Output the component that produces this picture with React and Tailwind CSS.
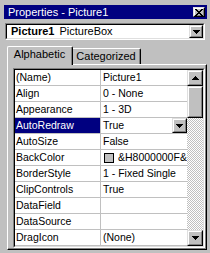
import React from "react";

function DownArrow() {
  return (
    <svg width="7" height="4" viewBox="0 0 7 4" shapeRendering="crispEdges">
      <rect x="0" y="0" width="7" height="1" fill="#000" />
      <rect x="1" y="1" width="5" height="1" fill="#000" />
      <rect x="2" y="2" width="3" height="1" fill="#000" />
      <rect x="3" y="3" width="1" height="1" fill="#000" />
    </svg>
  );
}

function UpArrow() {
  return (
    <svg width="7" height="4" viewBox="0 0 7 4" shapeRendering="crispEdges">
      <rect x="3" y="0" width="1" height="1" fill="#000" />
      <rect x="2" y="1" width="3" height="1" fill="#000" />
      <rect x="1" y="2" width="5" height="1" fill="#000" />
      <rect x="0" y="3" width="7" height="1" fill="#000" />
    </svg>
  );
}

function Raised({ className, children }) {
  return (
    <div className={"border-t border-l border-t-[#dfdfdf] border-l-[#dfdfdf] border-r border-b border-r-black border-b-black " + className}>
      <div className="w-full h-full border-t border-l border-t-white border-l-white border-r border-b border-r-[#808080] border-b-[#808080] bg-[#c0c0c0] flex items-center justify-center">
        {children}
      </div>
    </div>
  );
}

const rows = [
  ["(Name)", "Picture1", ""],
  ["Align", "0 - None", ""],
  ["Appearance", "1 - 3D", ""],
  ["AutoRedraw", "True", "sel"],
  ["AutoSize", "False", ""],
  ["BackColor", "&H8000000F&", "color"],
  ["BorderStyle", "1 - Fixed Single", ""],
  ["ClipControls", "True", ""],
  ["DataField", "", ""],
  ["DataSource", "", ""],
  ["DragIcon", "(None)", ""],
];

export default function App() {
  return (
    <div className="w-[210px] h-[253px] bg-[#c0c0c0] overflow-hidden pt-[5px] font-['Liberation_Sans',Arial,sans-serif] text-black select-none">
      {/* Title bar */}
      <div className="ml-[4px] w-[203px] h-[14px] bg-[#000080] flex items-center justify-between">
        <span className="pl-[4px] text-white text-[11px] leading-[14px] whitespace-nowrap">Properties - Picture1</span>
        <Raised className="w-[12px] h-[10px] mr-[2px]">
          <svg width="8" height="7" viewBox="0 0 8 7" shapeRendering="crispEdges">
            <path d="M0 0h2v1h-2zM6 0h2v1h-2zM1 1h2v1h-2zM5 1h2v1h-2zM2 2h4v1h-4zM3 3h2v1h-2zM2 4h4v1h-4zM1 5h2v1h-2zM5 5h2v1h-2zM0 6h2v1h-2zM6 6h2v1h-2z" fill="#000" />
          </svg>
        </Raised>
      </div>

      {/* Object combo */}
      <div className="mt-[4px] ml-[5px] w-[200px] h-[17px] border-t border-l border-t-[#808080] border-l-[#808080] border-r border-b border-r-white border-b-white">
        <div className="w-full h-full border-t border-l border-t-black border-l-black border-r border-b border-r-[#dfdfdf] border-b-[#dfdfdf] bg-white flex items-center">
          <div className="flex-1 flex items-center pl-[4px] text-[11px] leading-[13px] whitespace-nowrap">
            <span className="font-bold">Picture1</span>
            <span className="ml-[5px]">PictureBox</span>
          </div>
          <Raised className="w-[14px] h-[13px]">
            <DownArrow />
          </Raised>
        </div>
      </div>

      {/* Tabs */}
      <div className="mt-[6px] ml-[7px] h-[18px] flex items-start">
        <div className="relative z-10 w-[66px] h-[19px] bg-[#c0c0c0] border-t border-l border-t-white border-l-white border-r border-r-black rounded-tl-[2px] rounded-tr-[2px]">
          <div className="h-full border-r border-r-[#808080] pt-[1px] text-center text-[11px] leading-[13px]">Alphabetic</div>
        </div>
        <div className="mt-[2px] w-[68px] h-[16px] border-t border-t-white border-r border-r-black rounded-tr-[2px]">
          <div className="h-full border-r border-r-[#808080] pt-[1px] text-center text-[11px] leading-[13px] whitespace-nowrap">Categorized</div>
        </div>
      </div>

      {/* Tab panel */}
      <div className="ml-[7px] w-[200px] h-[186px] border-t border-l border-t-white border-l-white border-r border-b border-r-black border-b-black">
        <div className="h-full border-r border-b border-r-[#808080] border-b-[#808080] pt-[3px] pl-[5px]">
          {/* Grid */}
          <div className="w-[192px] h-[180px] border-t border-l border-t-[#808080] border-l-[#808080] border-r border-b border-r-white border-b-white">
            <div className="w-full h-full border-t border-l border-t-black border-l-black border-r border-b border-r-[#dfdfdf] border-b-[#dfdfdf] bg-white flex">
              <div className="w-[172px] flex flex-col">
                {rows.map(([name, value, kind]) => (
                  <div key={name} className="h-[16px] flex border-b border-b-[#c0c0c0] text-[10.5px] leading-[15px]">
                    <div className={"w-[86px] shrink-0 border-r border-r-[#c0c0c0] pl-[1px] whitespace-nowrap overflow-hidden " + (kind === "sel" ? "bg-[#000080] text-white" : "")}>
                      {name}
                    </div>
                    {kind === "color" ? (
                      <div className="w-[86px] flex items-center pl-[3px] overflow-hidden whitespace-nowrap">
                        <span className="w-[10px] h-[10px] shrink-0 border border-black bg-[#c0c0c0]"></span>
                        <span className="ml-[4px]">{value}</span>
                      </div>
                    ) : kind === "sel" ? (
                      <div className="w-[86px] flex items-center overflow-hidden whitespace-nowrap">
                        <span className="flex-1 pl-[2px]">{value}</span>
                        <Raised className="w-[15px] h-[15px]">
                          <DownArrow />
                        </Raised>
                      </div>
                    ) : (
                      <div className="w-[86px] pl-[2px] overflow-hidden whitespace-nowrap">{value}</div>
                    )}
                  </div>
                ))}
              </div>
              {/* Scrollbar */}
              <div className="w-[16px] h-[176px] flex flex-col">
                <Raised className="w-[16px] h-[16px] shrink-0">
                  <UpArrow />
                </Raised>
                <Raised className="w-[16px] h-[32px] shrink-0"></Raised>
                <div className="flex-1 bg-[image:repeating-conic-gradient(#c0c0c0_0%_25%,#ffffff_0%_50%)] bg-[length:2px_2px]"></div>
                <Raised className="w-[16px] h-[16px] shrink-0">
                  <DownArrow />
                </Raised>
              </div>
            </div>
          </div>
        </div>
      </div>
    </div>
  );
}
